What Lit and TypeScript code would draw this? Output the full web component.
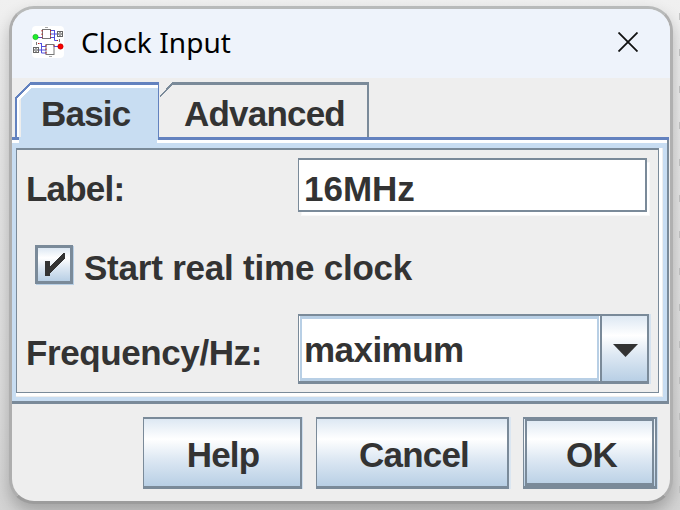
import { LitElement, html, css } from "lit";
import { customElement, state } from "lit/decorators.js";

@customElement("app-root")
export class AppRoot extends LitElement {
  @state() private checked = true;

  static styles = css`
    :host {
      display: block;
      box-sizing: border-box;
      width: 680px;
      height: 510px;
      padding: 6px 7px 6px 9px;
      overflow: hidden;
      background:
        repeating-linear-gradient(180deg, transparent 0 13px, #c6c6c6 13px 20px, transparent 20px 36.4px) 679px 0 / 1px 510px no-repeat,
        linear-gradient(180deg, #f0f0f0 0, #e6e6e6 35%, #dedede 75%, #d4d4d4 100%);
      font: bold 35px "Liberation Sans", Arial, sans-serif;
      color: #333;
    }
    * { box-sizing: border-box; }
    .window {
      width: 664px;
      height: 498px;
      border: 3px solid;
      border-color: #b8baba #b0b0b0 #9c9c9c #aeaeae;
      border-radius: 25px;
      background: #eee;
      overflow: hidden;
      display: flex;
      flex-direction: column;
      box-shadow: 0 8px 16px rgba(0, 0, 0, 0.24);
    }
    .titlebar {
      height: 69px;
      flex: none;
      background: #eef3fb;
      display: flex;
      align-items: center;
      padding: 0 32px 3px 20px;
    }
    .title {
      flex: 1;
      margin-left: 17px;
      font: 28px/40px "Noto Sans", sans-serif;
      letter-spacing: 0.1px;
      color: #000;
    }
    .appicon, .close { display: block; flex: none; }
    .tabs {
      height: 65px;
      flex: none;
      display: grid;
    }
    .tabs > * { grid-area: 1 / 1; }
    .tablabels {
      display: flex;
      padding: 16px 0 0 29px;
      line-height: 40px;
      letter-spacing: -0.8px;
    }
    .tab { width: 143px; }
    .pane {
      height: 261px;
      flex: none;
      width: 657px;
      background: #c8ddf2;
      border-right: 2px solid #7a8a99;
      border-bottom: 3px solid #7a8a99;
      padding: 5px 4px 4px;
    }
    .inner {
      height: 249px;
      width: 647px;
      border-right: 1px solid #eee;
      border-bottom: 1px solid #eee;
      background: #fff;
      padding: 0 3px 3px 0;
    }
    .form {
      height: 245px;
      width: 643px;
      background: #eee;
      border: 1px solid #7a8a99;
      border-top-width: 2px;
      padding: 8px 8px 0 9px;
      line-height: 40px;
    }
    .row { display: flex; }
    .lab {
      width: 272px;
      flex: none;
      padding-top: 11px;
      letter-spacing: -0.8px;
    }
    .field {
      width: 349px;
      height: 54px;
      border: 1px solid #7a8a99;
      border-width: 2px 2px 2px 1px;
      background: #fff;
      box-shadow: 3px 4px 0 -1px #fff, 3px 4px 0 0 #f8f8f8;
      padding: 9px 0 0 5px;
    }
    .check {
      margin: 33px 0 0 9px;
      align-items: flex-start;
      cursor: default;
    }
    .box {
      width: 38px;
      height: 39px;
      border: 3px solid #7a8a99;
      background: linear-gradient(#dde8f3, #fff 30%, #dde8f3 60%, #b8cfe5);
      box-shadow: 1px 1px 0 #b8cfe5;
    }
    .box svg { display: block; }
    .checklabel { margin: 3px 0 0 11px; letter-spacing: -0.22px; }
    .freq { margin-top: 26px; }
    .freq .lab { padding-top: 19px; letter-spacing: -0.4px; }
    .combo {
      width: 351px;
      height: 70px;
      border: 1px solid #7a8a99;
      border-width: 2px 2px 3px 1px;
      display: flex;
      background: #fff;
      box-shadow: 2px 0 0 #d5e2ef;
    }
    .value {
      width: 299px;
      margin: 0 1px;
      border: 2px solid #b8cfe5;
      border-width: 3px 2px;
      padding: 11px 0 0 2px;
      letter-spacing: -0.55px;
    }
    .drop {
      width: 47px;
      border-left: 2px solid #7a8a99;
      background: linear-gradient(#dde8f3, #fff 30%, #dde8f3 60%, #b8cfe5);
    }
    .drop svg { display: block; margin: 28px 0 0 11px; }
    .buttons {
      display: flex;
      padding: 13px 0 0 131px;
      letter-spacing: -0.8px;
    }
    .btn {
      height: 72px;
      border: 1px solid #7a8a99;
      border-width: 2px 2px 3px 1px;
      background: linear-gradient(#dde8f3, #fff 30%, #dde8f3 60%, #b8cfe5);
      box-shadow: 1px 0 0 #ccdcec;
      text-align: center;
      line-height: 40px;
      padding: 16px 0 0 2px;
    }
    .help { width: 159px; }
    .cancel { width: 193px; margin-left: 14px; padding-left: 4px; box-shadow: 2px 0 0 #dbe6f1; }
    .ok {
      width: 134px;
      margin-left: 14px;
      padding: 0 1px;
    }
    .okface {
      height: 67px;
      border: 2px solid #7a8a99;
      border-bottom-width: 3px;
      padding: 14px 0 0 4px;
    }
  `;

  private appIcon() {
    return html`<svg class="appicon" width="32" height="32" viewBox="0 0 32 32">
      <rect width="32" height="32" rx="4" fill="#fff" />
      <g fill="none" stroke="#777" stroke-width="1">
        <rect x="10.5" y="3.5" width="8" height="9" />
        <rect x="14" y="18.5" width="8" height="10" />
        <rect x="25.5" y="5.5" width="5" height="5" stroke="#666" />
        <circle cx="28" cy="8" r="1.3" stroke="#666" />
        <rect x="1.5" y="21.5" width="5" height="5" stroke="#666" />
        <circle cx="4" cy="24" r="1.3" stroke="#666" />
        <path d="M13 1.5h3M17 30.5h3" stroke="#aaa" />
      </g>
      <path
        d="M6 11.5h4M19 4.5h4M19 8h6M19 11.5h4M22.5 4v10.500h2.500M7 24h7M9.500 17v10M8 17.500h2M9.500 20.500h4.500M9.500 27h4.500M22 20.500h4"
        fill="none" stroke="#5050dc" stroke-width="1" />
      <path d="M10 4v8M18.500 4v8M14 19v9M22 19v3M25 14.500h1M6 17.500h2" stroke="#b22" stroke-width="1" stroke-dasharray="1.5 2" />
      <path d="M27.500 13v3M4.500 16v3" stroke="#777" />
      <circle cx="3.500" cy="11" r="2.700" fill="#1fee2c" stroke="#169a20" stroke-width=".5" />
      <circle cx="28.500" cy="20.500" r="2.700" fill="#f80000" stroke="#a00" stroke-width=".5" />
    </svg>`;
  }

  private tabFrame() {
    return html`<svg width="658" height="65" viewBox="12 78 658 65" shape-rendering="crispEdges">
      <path d="M12 137h657v3H12z" fill="#6382bf" />
      <path d="M12 140h655v3H12z" fill="#fff" />
      <path d="M667 140h2v3h-2z" fill="#7a8a99" />
      <path d="M17 137V98L31 85h127v3H31L19 100v37z" fill="#fff" />
      <path d="M21 143V98L31 88h127v52h-1v3H19v-6h2z" fill="#c8ddf2" />
      <path d="M19 137V100l2-2v39z" fill="#eee" />
      <path d="M15 137V97L30 82h129v55h-1V85H31L17 98v39z" fill="#6382bf" />
      <path d="M160 96L172 82h197v55h-2V85H173L160 97z" fill="#7a8a99" />
    </svg>`;
  }

  render() {
    return html`<div class="window">
      <div class="titlebar">
        ${this.appIcon()}
        <div class="title">Clock Input</div>
        <svg class="close" width="20" height="20" viewBox="0 0 20 20">
          <path d="M.5.5l19 19M19.5.5l-19 19" stroke="#111" stroke-width="1.8" />
        </svg>
      </div>
      <div class="tabs">
        ${this.tabFrame()}
        <div class="tablabels"><div class="tab">Basic</div><div>Advanced</div></div>
      </div>
      <div class="pane"><div class="inner"><div class="form">
        <div class="row">
          <div class="lab">Label:</div>
          <div class="field">16MHz</div>
        </div>
        <div class="row check" @click=${() => (this.checked = !this.checked)}>
          <div class="box">
            ${this.checked
              ? html`<svg width="32" height="33" viewBox="38 248 32 33" shape-rendering="crispEdges">
                  <path d="M45 261h5v5L63 253h2v6L50 273v3h-5z" fill="#333" />
                </svg>`
              : null}
          </div>
          <div class="checklabel">Start real time clock</div>
        </div>
        <div class="row freq">
          <div class="lab">Frequency/Hz:</div>
          <div class="combo">
            <div class="value">maximum</div>
            <div class="drop">
              <svg width="25" height="13" viewBox="0 0 25 13"><path d="M0 0h25L12.5 13z" fill="#333" /></svg>
            </div>
          </div>
        </div>
      </div></div></div>
      <div class="buttons">
        <div class="btn help">Help</div>
        <div class="btn cancel">Cancel</div>
        <div class="btn ok"><div class="okface">OK</div></div>
      </div>
    </div>`;
  }
}
